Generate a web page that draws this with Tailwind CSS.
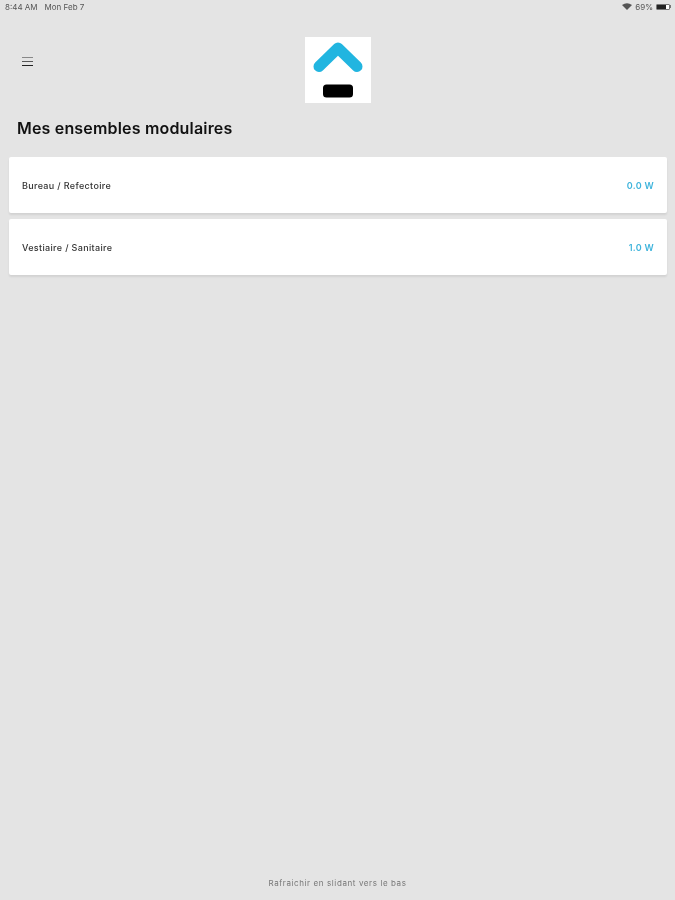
<!DOCTYPE html>
<html lang="fr">
<head>
    <meta charset="UTF-8">
    <title>Mes ensembles modulaires</title>
    <script src="https://cdn.jsdelivr.net/npm/@tailwindcss/browser@4"></script>
</head>
<body class="bg-[#e4e4e4] font-['Inter',sans-serif]">
<div class="h-[900px] w-[675px] flex flex-col overflow-hidden blur-[0.4px]">
    <!-- status bar -->
    <div class="h-[13px] flex items-center justify-between pl-[5px] pr-[4px] text-[8px] leading-none text-[#555]">
        <div class="flex gap-[7px]">
            <span>8:44 AM</span>
            <span>Mon Feb 7</span>
        </div>
        <div class="flex items-center gap-[3px]">
            <svg width="10" height="7" viewBox="0 0 10 7"><path d="M0 2 Q5 -1.5 10 2 L5 7 Z" fill="#555"/></svg>
            <span>69%</span>
            <div class="flex items-center">
                <div class="w-[14px] h-[6px] rounded-[1px] border border-[#777] bg-white">
                    <div class="h-full w-[9px] bg-[#222]"></div>
                </div>
                <div class="w-px h-[3px] bg-[#777]"></div>
            </div>
        </div>
    </div>

    <!-- header -->
    <div class="relative h-[66px] mt-[24px] flex items-center justify-center">
        <div class="absolute left-[22px] top-[20px] w-[11px] flex flex-col gap-[3px]">
            <div class="h-px bg-[#888]"></div>
            <div class="h-px bg-[#555]"></div>
            <div class="h-px bg-[#222]"></div>
        </div>
        <div class="w-[66px] h-[66px] bg-white">
            <svg width="66" height="66" viewBox="0 0 66 66">
                <path d="M14 29.5 L33 11 L52 29.5" fill="none" stroke="#21b5e0" stroke-width="11" stroke-linecap="round" stroke-linejoin="round"/>
                <rect x="18" y="47.5" width="30" height="13" rx="3.5" fill="#000"/>
            </svg>
        </div>
    </div>

    <h1 class="mt-[15px] ml-[17px] text-[16px] leading-[20px] font-semibold text-[#111] tracking-[0.18px]">Mes ensembles modulaires</h1>

    <!-- list -->
    <div class="mt-[19px] ml-[9px] mr-[8px] flex flex-col gap-[6px]">
        <div class="h-[56px] bg-white rounded-[2px] shadow-[0_2px_2px_rgba(0,0,0,0.08)] flex items-center justify-between px-[13px] pt-px">
            <span class="text-[9px] font-medium text-[#333] tracking-[0.34px]">Bureau / Refectoire</span>
            <span class="text-[9px] font-semibold text-[#3fb4dc] tracking-[0.3px]">0.0 W</span>
        </div>
        <div class="h-[56px] bg-white rounded-[2px] shadow-[0_2px_2px_rgba(0,0,0,0.08)] flex items-center justify-between px-[13px] pt-px">
            <span class="text-[9px] font-medium text-[#333] tracking-[0.34px]">Vestiaire / Sanitaire</span>
            <span class="text-[9px] font-semibold text-[#3fb4dc] tracking-[0.3px]">1.0 W</span>
        </div>
    </div>

    <div class="mt-auto mb-[11px] text-center text-[8px] leading-[12px] text-[#777] tracking-[0.6px]">Rafraichir en slidant vers le bas</div>
</div>
</body>
</html>
